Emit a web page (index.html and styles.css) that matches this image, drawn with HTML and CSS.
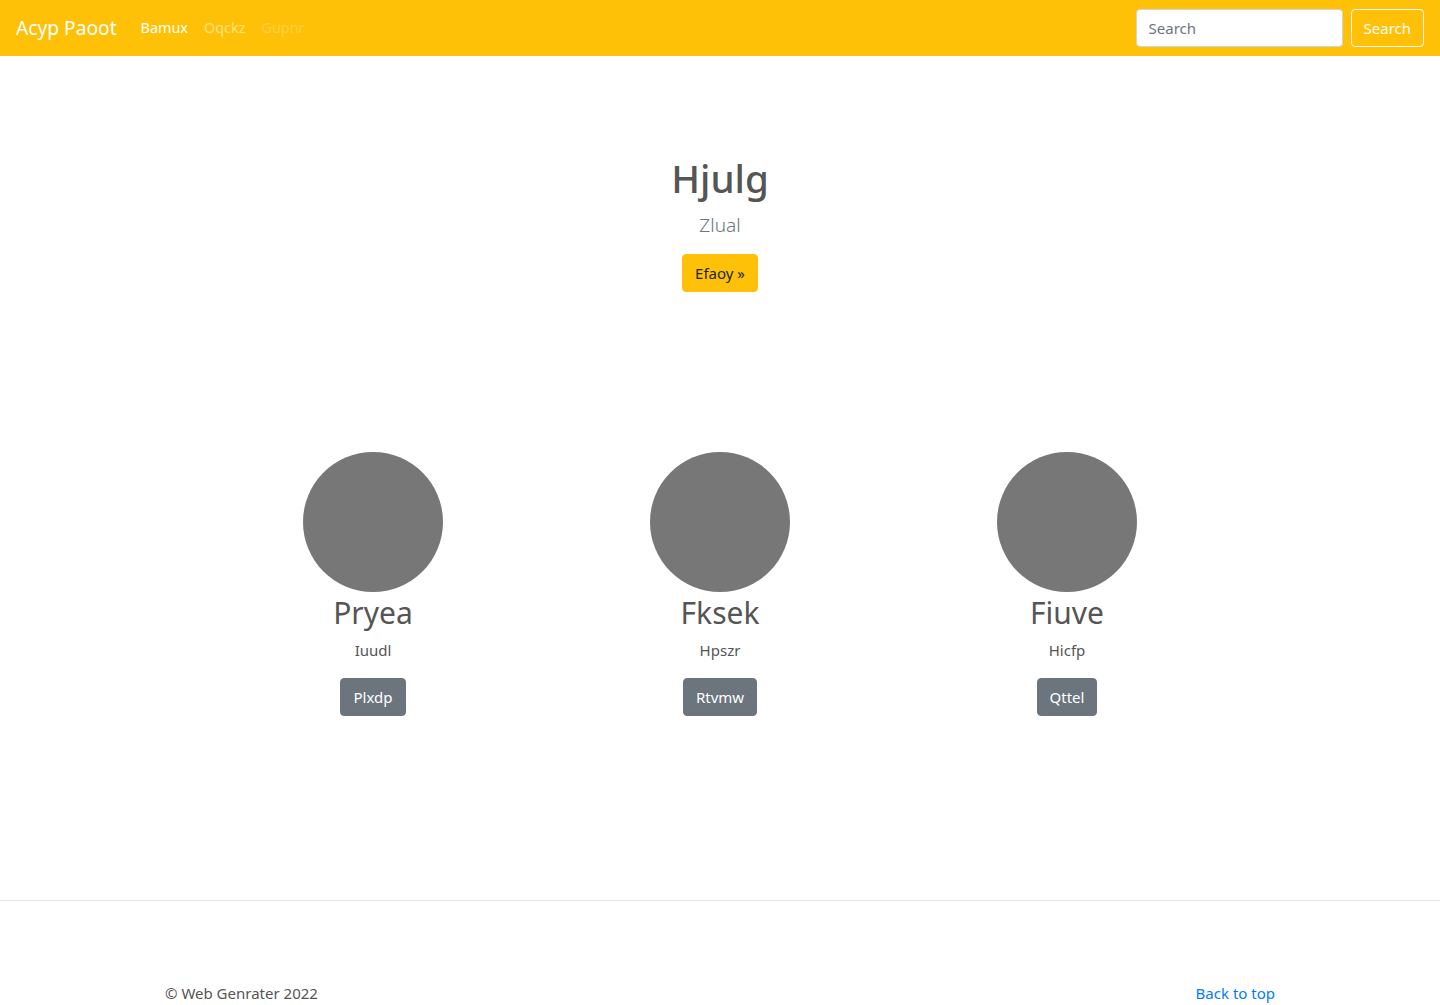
FILE: index.html
```html
<!DOCTYPE html>
<html lang="en">
<head>
<meta charset="utf-8">
<title>Acyp Paoot</title>
<link rel="stylesheet" href="styles.css">
</head>
<body>
<header class="navbar">
  <a class="brand" href="#">Acyp Paoot</a>
  <nav class="nav">
    <a class="nav-link active" href="#">Bamux</a>
    <a class="nav-link" href="#">Oqckz</a>
    <a class="nav-link disabled" href="#">Gupnr</a>
  </nav>
  <form class="search">
    <input class="search-input" type="text" placeholder="Search">
    <button class="btn btn-outline-light" type="button">Search</button>
  </form>
</header>
<main>
  <section class="hero">
    <h1 class="hero-title">Hjulg</h1>
    <p class="lead">Zlual</p>
    <a class="btn btn-warning" href="#">Efaoy &raquo;</a>
  </section>
  <section class="features">
    <div class="feature">
      <div class="circle"></div>
      <h2 class="feature-title">Pryea</h2>
      <p class="feature-text">Iuudl</p>
      <a class="btn btn-secondary" href="#">Plxdp</a>
    </div>
    <div class="feature">
      <div class="circle"></div>
      <h2 class="feature-title">Fksek</h2>
      <p class="feature-text">Hpszr</p>
      <a class="btn btn-secondary" href="#">Rtvmw</a>
    </div>
    <div class="feature">
      <div class="circle"></div>
      <h2 class="feature-title">Fiuve</h2>
      <p class="feature-text">Hicfp</p>
      <a class="btn btn-secondary" href="#">Qttel</a>
    </div>
  </section>
</main>
<footer class="footer">
  <div class="footer-inner">
    <p class="copy">&copy; Web Genrater 2022</p>
    <a class="back" href="#">Back to top</a>
  </div>
</footer>
</body>
</html>
```
FILE: styles.css
```css
* { box-sizing: border-box; }
html, body { margin: 0; padding: 0; }
body {
  font-family: "Noto Sans", "Open Sans", sans-serif;
  font-size: 16px;
  line-height: 1.5;
  color: #555;
  background: #fff;
}
a { text-decoration: none; }

.navbar {
  height: 56px;
  background: #ffc107;
  display: flex;
  align-items: center;
  padding: 0 16px;
}
.brand {
  color: #fff;
  font-size: 19.2px;
  line-height: 30px;
  margin-right: 16px;
}
.nav { display: flex; }
.nav-link {
  color: rgba(255,255,255,0.5);
  font-size: 14.4px;
  padding: 8px;
}
.nav-link.active { color: #fff; }
.nav-link.disabled { color: rgba(255,255,255,0.25); }
.search {
  margin-left: auto;
  display: flex;
  align-items: center;
}
.search-input {
  width: 207px;
  height: 38px;
  border: 1px solid #ced4da;
  border-radius: 4px;
  padding: 6px 12px;
  font: inherit;
  font-size: 15px;
  color: #495057;
  margin-right: 8px;
}
.search-input::placeholder { color: #6c757d; }

.btn {
  display: inline-block;
  height: 38px;
  line-height: 36px;
  padding: 0 12px;
  border: 1px solid transparent;
  border-radius: 4px;
  font-size: 15px;
  font-family: inherit;
  cursor: pointer;
}
.btn-outline-light {
  background: transparent;
  border-color: #f8f9fa;
  color: #f8f9fa;
}
.btn-warning {
  background: #ffc107;
  border-color: #ffc107;
  color: #212529;
}
.btn-secondary {
  background: #6c757d;
  border-color: #6c757d;
  color: #fff;
}

.hero {
  text-align: center;
  padding-top: 98px;
}
.hero-title {
  margin: 0;
  font-size: 38.5px;
  font-weight: 500;
  line-height: 48px;
  color: #555;
}
.lead {
  margin: 8px 0 14px;
  font-size: 19px;
  font-weight: 300;
  line-height: 30px;
  color: #6c757d;
}

.features {
  display: flex;
  justify-content: center;
  margin-top: 160px;
}
.feature {
  width: 347px;
  display: flex;
  flex-direction: column;
  align-items: center;
}
.circle {
  width: 140px;
  height: 140px;
  border-radius: 50%;
  background: #777;
}
.feature-title {
  margin: 2px 0 0;
  font-size: 30px;
  font-weight: 400;
  line-height: 38px;
  color: #555;
}
.feature-text {
  margin: 6px 0 16px;
  font-size: 15px;
  line-height: 24px;
}

.footer {
  margin-top: 184px;
  border-top: 1px solid #e5e5e5;
}
.footer-inner {
  width: 1110px;
  margin: 0 auto;
  display: flex;
  justify-content: space-between;
  padding-top: 81px;
}
.copy { margin: 0; font-size: 15px; }
.back { color: #007bff; font-size: 15px; }
```
